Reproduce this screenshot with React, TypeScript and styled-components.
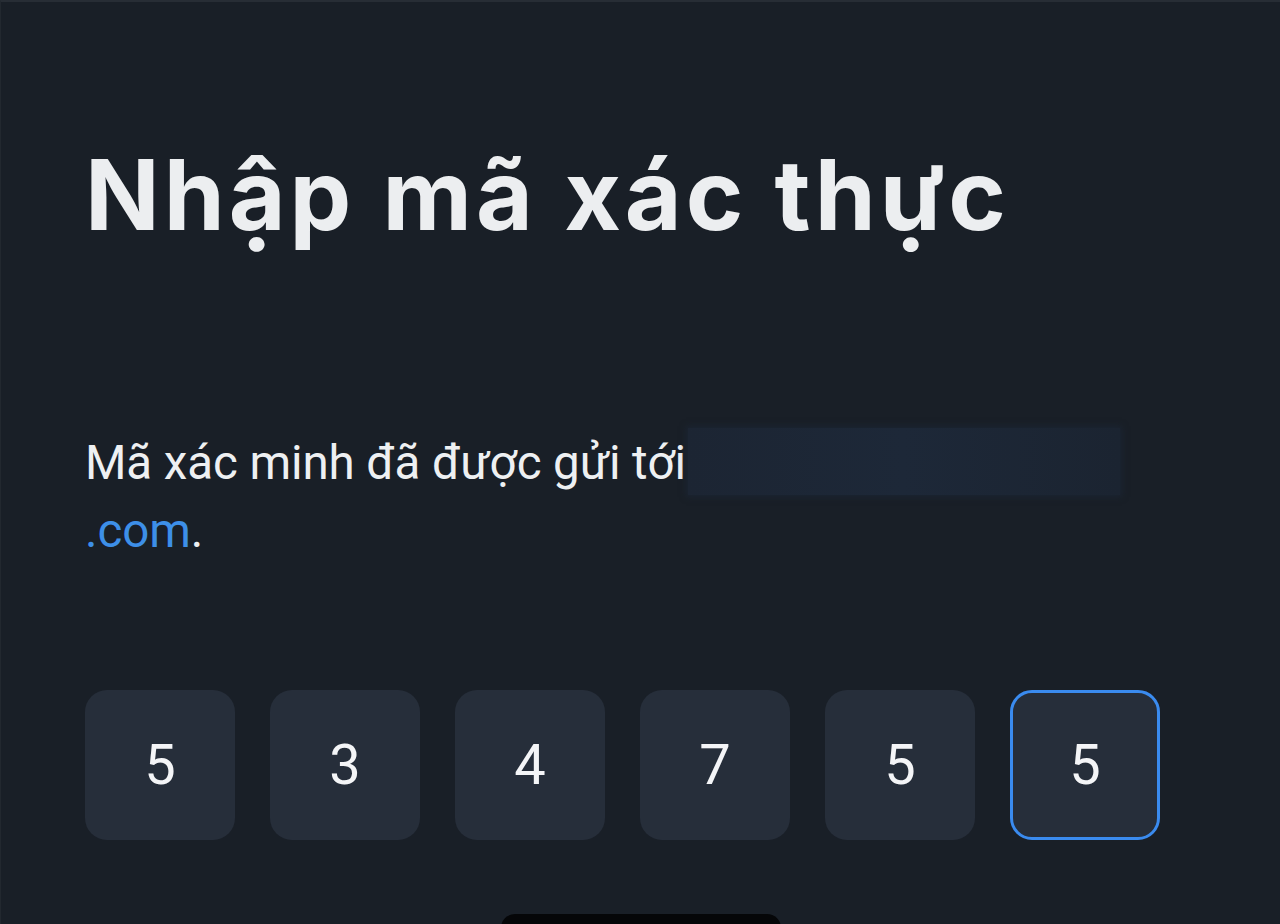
import React from 'react';
import styled, { createGlobalStyle } from 'styled-components';

const GlobalStyle = createGlobalStyle`
  html, body {
    margin: 0;
    padding: 0;
    background: #191f27;
  }
  * { box-sizing: border-box; }
`;

const digits = ['5', '3', '4', '7', '5', '5'];

export default function App() {
  return (
    <>
      <GlobalStyle />
      <Screen>
        <Content>
          <Title>Nhập mã xác thực</Title>
          <Message>
            Mã xác minh đã được gửi tới<Hidden />
            <br />
            <Email>.com</Email>.
          </Message>
          <CodeRow>
            {digits.map((d, i) => (
              <CodeBox key={i} $active={i === digits.length - 1}>
                {d}
              </CodeBox>
            ))}
          </CodeRow>
        </Content>
        <HomeBar />
      </Screen>
    </>
  );
}

const Screen = styled.div`
  width: 1280px;
  height: 924px;
  overflow: hidden;
  display: flex;
  flex-direction: column;
  background: #191f27;
  border-top: 2px solid #272d35;
  border-left: 1px solid #22282f;
`;

const Content = styled.div`
  flex: 1;
  display: flex;
  flex-direction: column;
  padding: 0 0 0 84px;
`;

const Title = styled.h1`
  margin: 128px 0 0 0;
  font-family: Inter, 'Noto Sans', sans-serif;
  font-weight: 700;
  font-size: 98px;
  line-height: 130px;
  letter-spacing: 4px;
  color: #eceef0;
`;

const Message = styled.p`
  margin: 168px 0 0 0;
  font-family: Roboto, 'Liberation Sans', sans-serif;
  font-size: 47.5px;
  line-height: 68px;
  letter-spacing: -0.1px;
  color: #eef0f2;
`;

const Hidden = styled.span`
  display: inline-block;
  width: 432px;
  height: 67px;
  vertical-align: -16px;
  margin-left: 2px;
  background: linear-gradient(90deg, #1c2533 0%, #1d2838 50%, #1b2431 100%);
  box-shadow: 0 0 6px 2px rgba(29, 40, 56, 0.6);
`;

const Email = styled.span`
  color: #3d8fe8;
`;

const CodeRow = styled.div`
  display: flex;
  gap: 35px;
  margin-top: 125px;
`;

const CodeBox = styled.div<{ $active?: boolean }>`
  width: 150px;
  height: 150px;
  border-radius: 22px;
  background: #262e3a;
  border: 3px solid ${(p) => (p.$active ? '#3a8bef' : 'transparent')};
  display: flex;
  align-items: center;
  justify-content: center;
  font-family: Roboto, 'Liberation Sans', sans-serif;
  font-size: 56px;
  color: #f4f5f7;
`;

const HomeBar = styled.div`
  align-self: center;
  width: 280px;
  height: 20px;
  margin-bottom: -10px;
  border-radius: 14px 14px 0 0;
  background: #050608;
`;
